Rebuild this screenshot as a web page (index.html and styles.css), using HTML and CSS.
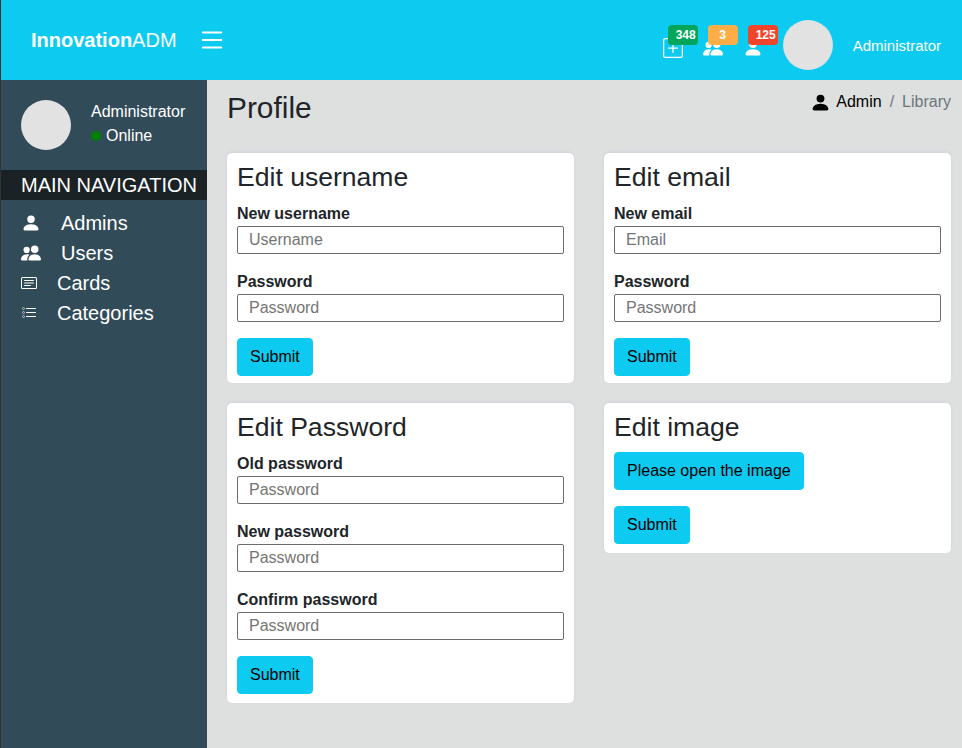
FILE: index.html
```html
<!DOCTYPE html>
<html>
  <head>
    <title>Profile - InnovationADM</title>
    <meta charset="UTF-8"/>
    <link rel="stylesheet" href="styles.css">
  </head>
  <body>
    <svg class="sprites" xmlns="http://www.w3.org/2000/svg">
      <symbol id="i-person" viewBox="0 0 16 16"><path d="M3 14s-1 0-1-1 1-4 6-4 6 3 6 4-1 1-1 1H3Zm5-6a3 3 0 1 0 0-6 3 3 0 0 0 0 6Z"/></symbol>
      <symbol id="i-people" viewBox="0 0 16 16"><path d="M7 14s-1 0-1-1 1-4 5-4 5 3 5 4-1 1-1 1H7Zm4-6a3 3 0 1 0 0-6 3 3 0 0 0 0 6Zm-5.784 6A2.238 2.238 0 0 1 5 13c0-1.355.68-2.75 1.936-3.72A6.325 6.325 0 0 0 5 9c-4 0-5 3-5 4s1 1 1 1h4.216ZM4.5 8a2.5 2.5 0 1 0 0-5 2.5 2.5 0 0 0 0 5Z"/></symbol>
      <symbol id="i-card" viewBox="0 0 16 16"><path d="M14.5 3a.5.5 0 0 1 .5.5v9a.5.5 0 0 1-.5.5h-13a.5.5 0 0 1-.5-.5v-9a.5.5 0 0 1 .5-.5h13zm-13-1A1.5 1.5 0 0 0 0 3.5v9A1.5 1.5 0 0 0 1.5 14h13a1.5 1.5 0 0 0 1.5-1.5v-9A1.5 1.5 0 0 0 14.5 2h-13z"/><path d="M3 5.5a.5.5 0 0 1 .5-.5h9a.5.5 0 0 1 0 1h-9a.5.5 0 0 1-.5-.5zM3 8a.5.5 0 0 1 .5-.5h9a.5.5 0 0 1 0 1h-9A.5.5 0 0 1 3 8zm0 2.5a.5.5 0 0 1 .5-.5h6a.5.5 0 0 1 0 1h-6a.5.5 0 0 1-.5-.5z"/></symbol>
      <symbol id="i-tasks" viewBox="0 0 16 16"><path fill-rule="evenodd" d="M2 2.5a.5.5 0 0 0-.5.5v1a.5.5 0 0 0 .5.5h1a.5.5 0 0 0 .5-.5V3a.5.5 0 0 0-.5-.5H2zM3 3H2v1h1V3z"/><path d="M5 3.5a.5.5 0 0 1 .5-.5h9a.5.5 0 0 1 0 1h-9a.5.5 0 0 1-.5-.5zM5.5 7a.5.5 0 0 0 0 1h9a.5.5 0 0 0 0-1h-9zm0 4a.5.5 0 0 0 0 1h9a.5.5 0 0 0 0-1h-9z"/><path fill-rule="evenodd" d="M1.5 7a.5.5 0 0 1 .5-.5h1a.5.5 0 0 1 .5.5v1a.5.5 0 0 1-.5.5H2a.5.5 0 0 1-.5-.5V7zM2 7h1v1H2V7zm0 3.5a.5.5 0 0 0-.5.5v1a.5.5 0 0 0 .5.5h1a.5.5 0 0 0 .5-.5v-1a.5.5 0 0 0-.5-.5H2zm1 .5H2v1h1v-1z"/></symbol>
      <symbol id="i-plus" viewBox="0 0 16 16"><path d="M14 1a1 1 0 0 1 1 1v12a1 1 0 0 1-1 1H2a1 1 0 0 1-1-1V2a1 1 0 0 1 1-1h12zM2 0a2 2 0 0 0-2 2v12a2 2 0 0 0 2 2h12a2 2 0 0 0 2-2V2a2 2 0 0 0-2-2H2z"/><path d="M8 4a.5.5 0 0 1 .5.5v3h3a.5.5 0 0 1 0 1h-3v3a.5.5 0 0 1-1 0v-3h-3a.5.5 0 0 1 0-1h3v-3A.5.5 0 0 1 8 4z"/></symbol>
      <symbol id="i-list" viewBox="0 0 16 16"><path d="M2.5 12a.5.5 0 0 1 .5-.5h10a.5.5 0 0 1 0 1H3a.5.5 0 0 1-.5-.5zm0-4a.5.5 0 0 1 .5-.5h10a.5.5 0 0 1 0 1H3a.5.5 0 0 1-.5-.5zm0-4a.5.5 0 0 1 .5-.5h10a.5.5 0 0 1 0 1H3a.5.5 0 0 1-.5-.5z"/></symbol>
    </svg>

    <header class="topbar">
      <div class="brand"><strong>Innovation</strong>ADM</div>
      <svg class="burger"><use href="#i-list"/></svg>
      <div class="top-right">
        <div class="notif">
          <svg class="notif-icon"><use href="#i-plus"/></svg>
          <span class="badge badge-green">348</span>
        </div>
        <div class="notif">
          <svg class="notif-icon"><use href="#i-people"/></svg>
          <span class="badge badge-orange">3</span>
        </div>
        <div class="notif">
          <svg class="notif-icon"><use href="#i-person"/></svg>
          <span class="badge badge-red">125</span>
        </div>
        <div class="avatar"></div>
        <div class="top-name">Administrator</div>
      </div>
    </header>

    <div class="wrap">
      <aside class="sidebar">
        <div class="user-panel">
          <div class="avatar"></div>
          <div class="user-info">
            <div class="user-name">Administrator</div>
            <div class="user-status"><span class="dot"></span>Online</div>
          </div>
        </div>
        <div class="nav-title">MAIN NAVIGATION</div>
        <ul class="nav">
          <li><svg class="nav-icon"><use href="#i-person"/></svg><span class="nav-wide">Admins</span></li>
          <li><svg class="nav-icon"><use href="#i-people"/></svg><span class="nav-wide">Users</span></li>
          <li><svg class="nav-icon nav-small"><use href="#i-card"/></svg><span>Cards</span></li>
          <li><svg class="nav-icon nav-small"><use href="#i-tasks"/></svg><span>Categories</span></li>
        </ul>
      </aside>

      <main class="content">
        <div class="page-head">
          <h1>Profile</h1>
          <div class="crumbs">
            <svg class="crumb-icon"><use href="#i-person"/></svg>
            <span class="crumb-link">Admin</span>
            <span class="crumb-sep">/</span>
            <span class="crumb-active">Library</span>
          </div>
        </div>

        <div class="columns">
          <div class="column">
            <section class="card">
              <h3>Edit username</h3>
              <label>New username</label>
              <input type="text" placeholder="Username">
              <label>Password</label>
              <input type="password" placeholder="Password">
              <button class="btn">Submit</button>
            </section>
            <section class="card card-tall">
              <h3>Edit Password</h3>
              <label>Old password</label>
              <input type="password" placeholder="Password">
              <label>New password</label>
              <input type="password" placeholder="Password">
              <label>Confirm password</label>
              <input type="password" placeholder="Password">
              <button class="btn">Submit</button>
            </section>
          </div>
          <div class="column">
            <section class="card">
              <h3>Edit email</h3>
              <label>New email</label>
              <input type="text" placeholder="Email">
              <label>Password</label>
              <input type="password" placeholder="Password">
              <button class="btn">Submit</button>
            </section>
            <section class="card card-tall">
              <h3>Edit image</h3>
              <button class="btn btn-file">Please open the image</button>
              <button class="btn">Submit</button>
            </section>
          </div>
        </div>
      </main>
    </div>
  </body>
</html>
```

FILE: styles.css
```css
* {
  box-sizing: border-box;
}
html, body {
  height: 100%;
}
body {
  margin: 0;
  border-left: 1px solid #333;
  background: #dee0e0;
  font-family: 'Liberation Sans', Arial, sans-serif;
  font-size: 16px;
  color: #212529;
  display: flex;
  flex-direction: column;
  overflow: hidden;
}
.sprites {
  display: none;
}
svg {
  fill: currentColor;
}

.topbar {
  height: 80px;
  flex: none;
  background: #0dcaf0;
  color: #fff;
  display: flex;
  align-items: center;
  padding-left: 30px;
}
.brand {
  font-size: 20px;
  width: 162px;
}
.burger {
  width: 30px;
  height: 30px;
  margin-left: 4px;
}
.top-right {
  margin-left: auto;
  display: flex;
  align-items: center;
  padding-right: 21px;
}
.notif {
  position: relative;
  width: 40px;
  height: 20px;
  margin-top: 16px;
}
.notif-icon {
  display: block;
  width: 20px;
  height: 20px;
}
.badge {
  position: absolute;
  top: -13px;
  left: 5px;
  width: 30px;
  height: 20px;
  padding: 0 8px;
  border-radius: 4px;
  font-size: 12px;
  font-weight: bold;
  line-height: 20px;
  text-align: center;
  white-space: nowrap;
  color: #fff;
}
.badge-green { background: #00a65a; }
.badge-orange { background: #ffad46; }
.badge-red { background: #f0452b; }
.avatar {
  width: 50px;
  height: 50px;
  flex: none;
  border-radius: 50%;
  background: #e2e2e2;
}
.top-right .avatar {
  margin-top: 10px;
}
.top-name {
  margin-left: 20px;
  font-size: 15px;
  margin-top: 10px;
}

.wrap {
  flex: 1;
  display: flex;
  min-height: 0;
}
.sidebar {
  width: 206px;
  flex: none;
  background: #324b59;
  color: #fff;
}
.user-panel {
  display: flex;
  padding: 20px;
  height: 90px;
}
.user-info {
  margin-left: 20px;
  font-size: 16px;
}
.user-name {
  line-height: 24px;
}
.user-status {
  line-height: 24px;
  display: flex;
  align-items: center;
}
.dot {
  width: 10px;
  height: 10px;
  border-radius: 50%;
  background: #008000;
  margin-right: 5px;
}
.nav-title {
  height: 30px;
  line-height: 30px;
  background: #1a2226;
  padding-left: 20px;
  font-size: 20px;
  white-space: nowrap;
}
.nav {
  list-style: none;
  margin: 8px 0 0;
  padding: 0;
  font-size: 20px;
}
.nav li {
  height: 30px;
  display: flex;
  align-items: center;
  padding-left: 20px;
}
.nav-icon {
  width: 20px;
  height: 20px;
  flex: none;
}
.nav-small {
  width: 16px;
  height: 16px;
  margin-right: 20px;
}
.nav-wide {
  margin-left: 20px;
}

.content {
  flex: 1;
  padding: 0 11px 0 20px;
}
.page-head {
  display: flex;
  justify-content: space-between;
  height: 73px;
}
h1 {
  margin: 9px 0 0;
  font-size: 29.86px;
  font-weight: 400;
  line-height: 38px;
}
.crumbs {
  display: flex;
  align-items: center;
  height: 24px;
  margin-top: 10px;
}
.crumb-icon {
  width: 21px;
  height: 21px;
  color: #000;
  margin-right: 5px;
}
.crumb-link {
  color: #000;
}
.crumb-sep {
  color: #6c757d;
  margin: 0 8px;
}
.crumb-active {
  color: #6c757d;
}
.columns {
  display: flex;
  gap: 30px;
}
.column {
  flex: 1;
  display: flex;
  flex-direction: column;
  gap: 20px;
}
.card {
  background: #fff;
  border-radius: 5px;
  padding: 9px 10px 7.12px;
  box-shadow: 0 -1px 3px rgba(120, 120, 180, 0.15);
}
.card-tall {
  padding-bottom: 9.12px;
}
h3 {
  margin: 0 0 8px;
  font-size: 26.57px;
  font-weight: 400;
  line-height: 31.88px;
}
label {
  display: block;
  font-weight: bold;
  line-height: 24px;
}
input {
  display: block;
  width: 100%;
  height: 28px;
  margin-bottom: 16px;
  padding: 0 11px;
  border: 1px solid #6b6b6b;
  border-radius: 2px;
  font: inherit;
  color: #212529;
  background: #fff;
}
input::placeholder {
  color: #757575;
}
.btn {
  display: block;
  height: 38px;
  padding: 0 12px;
  border: 1px solid #0dcaf0;
  border-radius: 4px;
  background: #0dcaf0;
  color: #000;
  font: inherit;
}
.btn-file {
  margin-bottom: 16px;
}
```
